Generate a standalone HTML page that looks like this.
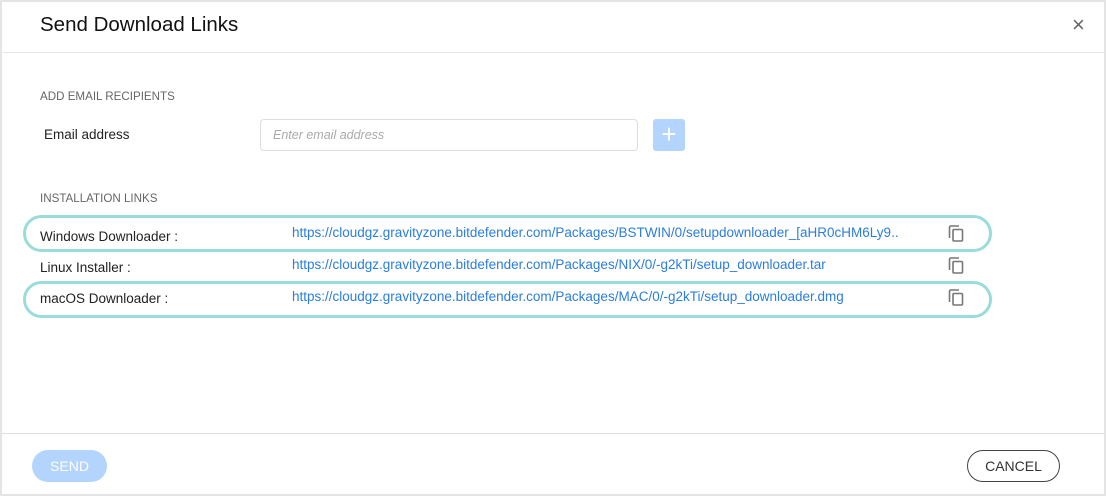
<!DOCTYPE html>
<html><head><style>
*{margin:0;padding:0;box-sizing:border-box}
body{width:1106px;height:496px;background:#e4e4e4;font-family:"Liberation Sans",sans-serif;position:relative;overflow:hidden}
.dlg{position:absolute;left:2px;top:2px;width:1102px;height:492px;background:#fff}
.a{position:absolute;white-space:nowrap}
.lbl{font-size:13.5px;color:#222}
.link{font-size:13.5px;color:#2a7de1}
.oval{position:absolute;left:21px;width:969px;height:37px;border:3px solid #9adcd9;border-radius:19px}
.cp{position:absolute;width:16px;height:17px}
</style></head><body>
<div class="dlg">
<div class="a" style="left:38px;top:11px;font-size:20.5px;color:#111">Send Download Links</div>
<div class="a" style="left:1070px;top:10px;font-size:22px;color:#666">×</div>
<div class="a" style="left:0;top:50px;width:1102px;height:1px;background:#e6e6e6"></div>
<div class="a" style="left:38px;top:88px;font-size:11.6px;color:#666">ADD EMAIL RECIPIENTS</div>
<div class="a lbl" style="left:42px;top:125px">Email address</div>
<div class="a" style="left:258px;top:117px;width:378px;height:32px;border:1px solid #ddd;border-radius:4px"></div>
<div class="a" style="left:271px;top:126px;font-size:12.5px;color:#aaa;font-style:italic">Enter email address</div>
<div class="a" style="left:651px;top:117px;width:32px;height:32px;background:#b3d4fc;border-radius:3px;color:#fff;font-size:26px;text-align:center;line-height:30px">+</div>
<div class="a" style="left:38px;top:190px;font-size:11.6px;color:#666">INSTALLATION LINKS</div>
<div class="oval" style="top:213px"></div>
<div class="oval" style="top:279px"></div>
<div class="a lbl" style="left:38px;top:227px">Windows Downloader :</div>
<div class="a lbl" style="left:38px;top:258px">Linux Installer :</div>
<div class="a lbl" style="left:38px;top:289px">macOS Downloader :</div>
<div class="a link" style="left:290px;top:223px">https://cloudgz.gravityzone.bitdefender.com/Packages/BSTWIN/0/setupdownloader_[aHR0cHM6Ly9..</div>
<div class="a link" style="left:290px;top:255px">https://cloudgz.gravityzone.bitdefender.com/Packages/NIX/0/-g2kTi/setup_downloader.tar</div>
<div class="a link" style="left:290px;top:287px">https://cloudgz.gravityzone.bitdefender.com/Packages/MAC/0/-g2kTi/setup_downloader.dmg</div>
<svg class="cp" style="left:946px;top:223px" viewBox="0 0 16 17"><path d="M1.5 13V2.5Q1.5 1 3 1H11" fill="none" stroke="#777" stroke-width="1.6"/><rect x="5" y="4.5" width="9.5" height="11.5" rx="1" fill="none" stroke="#777" stroke-width="1.6"/></svg>
<svg class="cp" style="left:946px;top:255px" viewBox="0 0 16 17"><path d="M1.5 13V2.5Q1.5 1 3 1H11" fill="none" stroke="#777" stroke-width="1.6"/><rect x="5" y="4.5" width="9.5" height="11.5" rx="1" fill="none" stroke="#777" stroke-width="1.6"/></svg>
<svg class="cp" style="left:946px;top:287px" viewBox="0 0 16 17"><path d="M1.5 13V2.5Q1.5 1 3 1H11" fill="none" stroke="#777" stroke-width="1.6"/><rect x="5" y="4.5" width="9.5" height="11.5" rx="1" fill="none" stroke="#777" stroke-width="1.6"/></svg>
<div class="a" style="left:0;top:431px;width:1102px;height:1px;background:#ddd"></div>
<div class="a" style="left:30px;top:448px;width:75px;height:32px;background:#b3d4fc;border-radius:16px;color:#fff;font-size:14px;text-align:center;line-height:32px">SEND</div>
<div class="a" style="left:965px;top:448px;width:93px;height:32px;border:1px solid #444;border-radius:16px;color:#333;font-size:14px;text-align:center;line-height:30px">CANCEL</div>
</div>
</body></html>
